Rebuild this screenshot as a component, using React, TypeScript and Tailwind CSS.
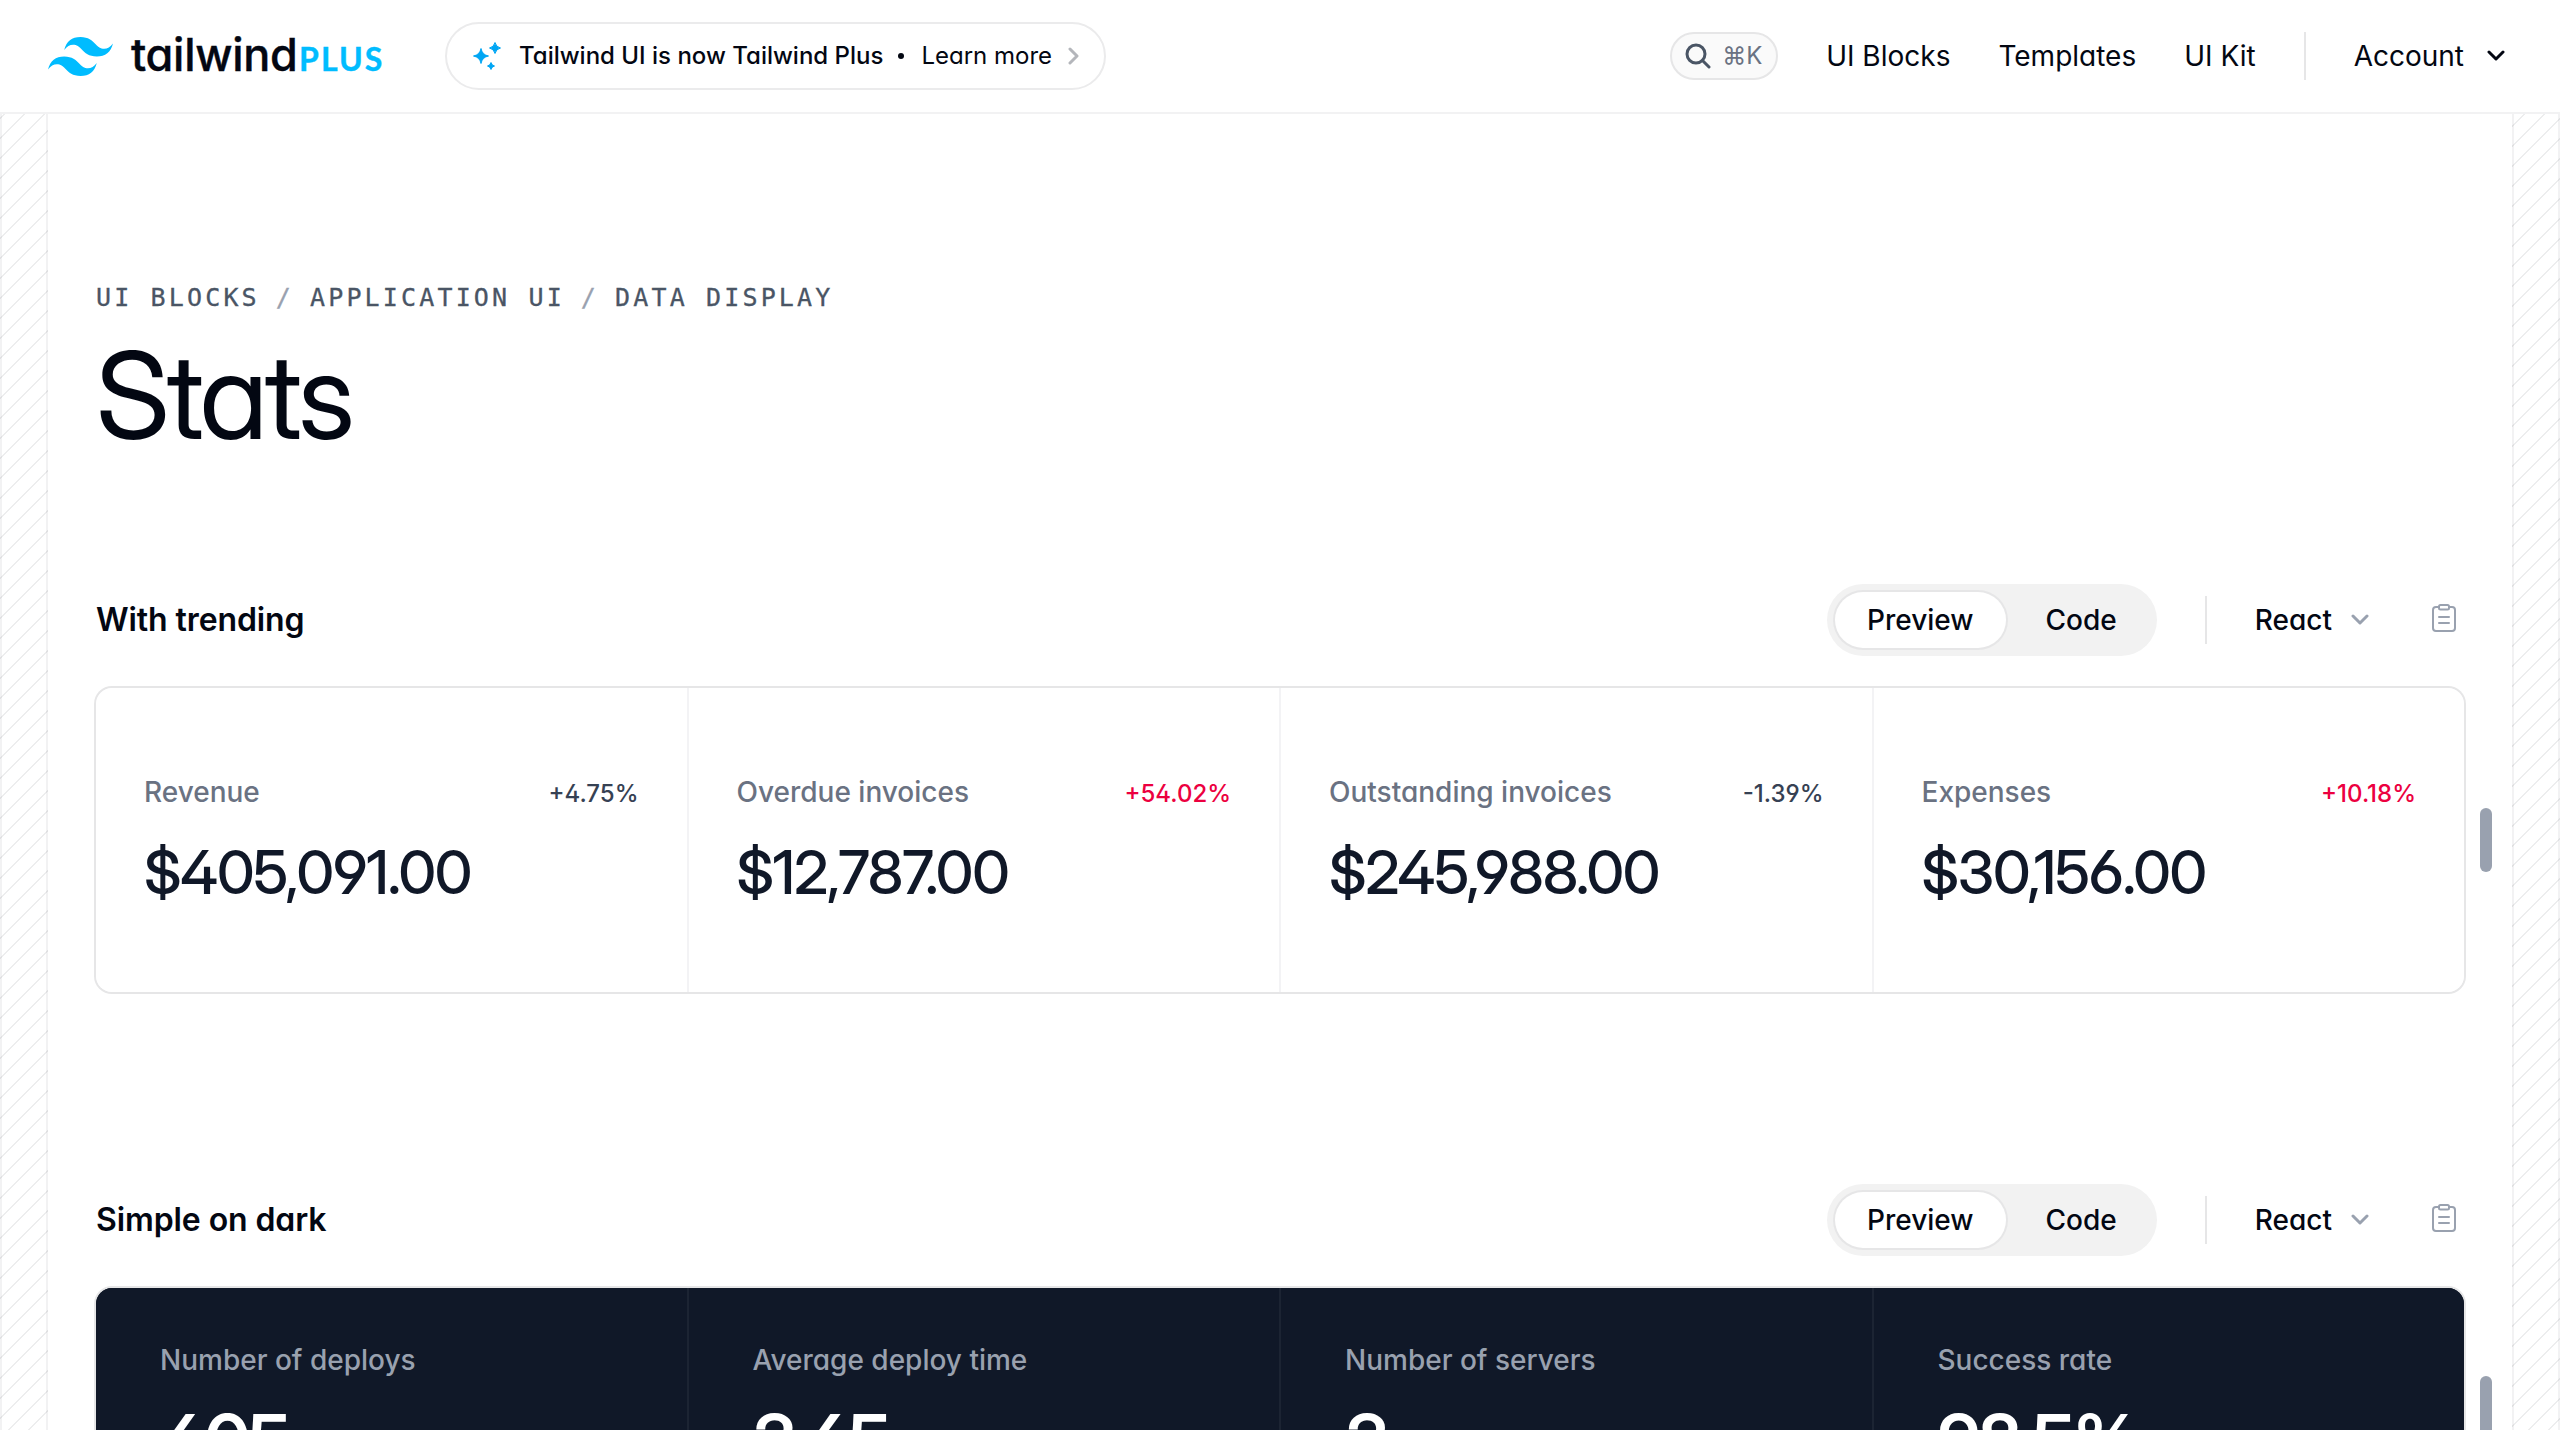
import React from 'react';

const stats = [
  { name: 'Revenue', value: '$405,091.00', change: '+4.75%', negative: false },
  { name: 'Overdue invoices', value: '$12,787.00', change: '+54.02%', negative: true },
  { name: 'Outstanding invoices', value: '$245,988.00', change: '-1.39%', negative: false },
  { name: 'Expenses', value: '$30,156.00', change: '+10.18%', negative: true },
];

const darkStats = [
  { name: 'Number of deploys', value: '405' },
  { name: 'Average deploy time', value: '3.65' },
  { name: 'Number of servers', value: '3' },
  { name: 'Success rate', value: '98.5%' },
];

function Logo() {
  return (
    <div className="flex w-[335px] items-center">
      <svg viewBox="0 0 65 39" className="h-[39px] w-[65px] shrink-0" fill="#00bcff">
        <path d="M32.500 0C23.800 0 18.400 4.300 16.200 13c3.300-4.300 7.100-6 11.400-4.900 2.500.6 4.200 2.400 6.200 4.400C37 15.800 40.700 19.500 48.800 19.500 57.400 19.500 62.800 15.200 65 6.500c-3.300 4.300-7.100 6-11.400 4.900-2.500-.6-4.200-2.400-6.200-4.400C44.200 3.700 40.500 0 32.500 0zM16.200 19.500C7.600 19.500 2.200 23.800 0 32.500c3.300-4.300 7.100-6 11.400-4.900 2.500.6 4.200 2.400 6.200 4.400 3.200 3.300 6.900 7 15 7 8.600 0 14-4.300 16.200-13-3.300 4.300-7.100 6-11.400 4.900-2.500-.6-4.200-2.400-6.200-4.400-3.200-3.300-6.900-7-15-7z" />
      </svg>
      <div className="ml-[18px] flex items-baseline leading-[57px]">
        <span className="w-[168px] text-[45px] font-medium tracking-[-0.3px] [-webkit-text-stroke:0.4px_currentColor]">tailwind</span>
        <span className="font-['Lato',sans-serif] text-[32px] font-bold tracking-[2.100px] text-[#00bcff] [-webkit-text-stroke:0.4px_currentColor]">PLUS</span>
      </div>
    </div>
  );
}

function Chevron({ className }: { className: string }) {
  return (
    <svg viewBox="0 0 20 12" className={className} fill="none" stroke="currentColor" strokeWidth="3" strokeLinecap="round" strokeLinejoin="round">
      <path d="M3 2 10 9 17 2" />
    </svg>
  );
}

function Header() {
  return (
    <header className="flex h-[114px] shrink-0 items-center justify-between border-b-2 border-[#f2f2f3] bg-white px-12">
      <div className="flex items-center">
        <Logo />
        <div className="ml-[62px] flex h-[68px] w-[661px] items-center rounded-full border-2 border-[#ebebec] pl-[25px] text-2xl">
          <svg viewBox="0 0 30 30" className="h-[30px] w-[30px]" fill="#00a6f4" stroke="#00a6f4" strokeWidth="1" strokeLinejoin="round">
            <path d="M9 7.500q1.200 6.300 7.500 7.500-6.300 1.200-7.500 7.500-1.200-6.300-7.500-7.500 6.300-1.200 7.500-7.500zM23 1.500q1 4.500 5.500 5.500-4.500 1-5.500 5.500-1-4.500-5.500-5.500 4.500-1 5.500-5.500zM19 21.500q.8 2.900 3.500 3.500-2.700.6-3.500 3.500-.8-2.900-3.500-3.500 2.700-.6 3.500-3.500z" />
          </svg>
          <span className="ml-[17px] font-medium">Tailwind UI is now Tailwind Plus</span>
          <span className="ml-[15px] h-[6px] w-[6px] rounded-full bg-[#030712]" />
          <span className="ml-[17px]">Learn more</span>
          <svg viewBox="0 0 12 18" className="ml-[16px] h-[18px] w-[12px]" fill="none" stroke="#b4b6bb" strokeWidth="3" strokeLinecap="round" strokeLinejoin="round">
            <path d="M2 2 9 9 2 16" />
          </svg>
        </div>
      </div>
      <nav className="flex items-center text-[28px]">
        <div className="flex h-12 w-[108px] items-center rounded-full border-2 border-[#e6e6e7] bg-[#fafafa] pl-[13px] text-2xl text-[#6a7282]">
          <svg viewBox="0 0 26 26" className="h-[26px] w-[26px]" fill="none" stroke="#4a5565" strokeWidth="3" strokeLinecap="round">
            <circle cx="11" cy="11" r="9" />
            <path d="m17.500 17.500 6.500 6.500" />
          </svg>
          <span className="ml-[11px] whitespace-nowrap">⌘K</span>
        </div>
        <span className="ml-12">UI Blocks</span>
        <span className="ml-12">Templates</span>
        <span className="ml-12">UI Kit</span>
        <span className="ml-12 h-12 w-0.5 bg-[#e6e6e7]" />
        <span className="ml-12">Account</span>
        <Chevron className="mr-[6px] ml-[22px] h-[12px] w-[20px]" />
      </nav>
    </header>
  );
}

function SectionHeader({ title }: { title: string }) {
  return (
    <div className="flex h-[72px] items-center">
      <h2 className="flex-1 text-[32px] font-semibold tracking-[-0.1px]">{title}</h2>
      <div className="flex h-[72px] items-center gap-2 rounded-full bg-[#f2f2f2] p-2 text-[28px] font-medium">
        <span className="flex h-14 items-center rounded-full bg-white px-8 ring-2 ring-[#e6e6e7]">Preview</span>
        <span className="flex h-14 items-center px-8">Code</span>
      </div>
      <span className="ml-12 h-12 w-0.5 bg-[#e6e6e7]" />
      <span className="ml-12 text-[28px] font-medium">React</span>
      <Chevron className="ml-[18px] h-[12px] w-[20px] text-[#99a1af]" />
      <svg viewBox="0 0 24 28" className="mr-2 ml-[62px] h-[28px] w-[24px] -translate-y-0.5" fill="none" stroke="#99a1af" strokeWidth="2">
        <path d="M7 3H4a3 3 0 0 0-3 3v18a3 3 0 0 0 3 3h16a3 3 0 0 0 3-3V6a3 3 0 0 0-3-3h-3" />
        <rect x="7" y="1" width="10" height="4.500" rx="1.500" />
        <path d="M7 13h10M7 19h10" strokeLinecap="round" />
      </svg>
    </div>
  );
}

function Handle() {
  return <span className="absolute top-1/2 -right-7 h-16 w-3 -translate-y-1/2 rounded-full bg-[#99a1af]" />;
}

const gutter =
  'w-12 shrink-0 border-x-2 border-[#0307120d] bg-[repeating-linear-gradient(315deg,#03071212_0,#03071212_2px,transparent_0,transparent_50%)] bg-[length:20px_20px]';

export default function App() {
  return (
    <div className="flex h-[1430px] w-[2560px] flex-col overflow-hidden bg-white font-['Inter',sans-serif] text-[#030712] [font-feature-settings:'cv02','cv03','cv04','cv11']">
      <Header />
      <div className="flex min-h-0 flex-1">
        <div className={gutter + ' bg-[position:4px_0px]'} />
        <main className="min-w-0 flex-1 px-12 pt-[166px]">
          <p className="flex h-[36px] items-center gap-4 font-['DejaVu_Sans_Mono',monospace] text-[25px] tracking-[3.150px] text-[#4a5565] [-webkit-text-stroke:0.3px_currentColor]">
            <span>UI BLOCKS</span>
            <span className="text-[#99a1af]">/</span>
            <span>APPLICATION UI</span>
            <span className="text-[#99a1af]">/</span>
            <span>DATA DISPLAY</span>
          </p>
          <h1 className="mt-[20px] font-['Inter_Display','Inter',sans-serif] text-[120px] leading-[120px] tracking-[-0.025em]">Stats</h1>
          <section className="mt-[128px]">
            <SectionHeader title="With trending" />
            <div className="relative mt-8">
              <dl className="grid grid-cols-4 gap-[2px] overflow-hidden rounded-2xl bg-[#f3f3f5] ring-2 ring-[#e6e6e7]">
                {stats.map((s) => (
                  <div key={s.name} className="flex flex-col gap-y-4 bg-white px-12 py-20">
                    <div className="flex h-12 items-baseline justify-between leading-[48px]">
                      <dt className="text-[28px] font-medium text-[#6a7282]">{s.name}</dt>
                      <dd className={s.negative ? 'text-2xl font-medium text-[#ec003f]' : 'text-2xl font-medium text-[#364153]'}>{s.change}</dd>
                    </div>
                    <dd className="font-['Inter_Display','Inter',sans-serif] text-[60px] leading-[80px] font-medium tracking-[-1.250px] text-[#101828]">{s.value}</dd>
                  </div>
                ))}
              </dl>
              <Handle />
            </div>
          </section>
          <section className="mt-48">
            <SectionHeader title="Simple on dark" />
            <div className="relative mt-8">
              <dl className="grid grid-cols-4 gap-[2px] overflow-hidden rounded-2xl bg-[#1c2433] ring-2 ring-[#e6e6e7]">
                {darkStats.map((s) => (
                  <div key={s.name} className="bg-[#101828] px-16 py-12">
                    <dt className="text-[28px] leading-[48px] font-medium text-[#99a1af]">{s.name}</dt>
                    <dd className="mt-4 font-['Inter_Display','Inter',sans-serif] text-[72px] leading-[80px] font-semibold tracking-tight text-white">
                      {s.value}
                    </dd>
                  </div>
                ))}
              </dl>
              <Handle />
            </div>
          </section>
        </main>
        <div className={gutter + ' bg-[position:12px_0px]'} />
      </div>
    </div>
  );
}
